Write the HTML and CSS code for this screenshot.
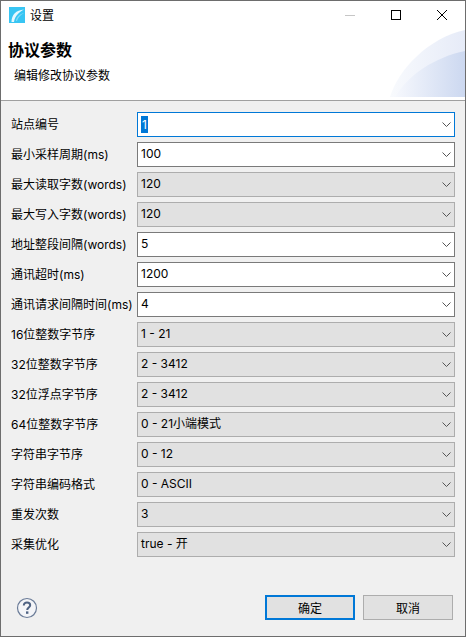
FILE: index.html
```html
<!DOCTYPE html>
<html>
<head>
	<title>设置</title>
	<meta charset="utf-8">
	<link rel="stylesheet" href="styles.css">
</head>
<body>
    <svg class="defs" width="0" height="0">
        <symbol id="chevron" viewBox="0 0 9 5">
            <path d="M0.5 0.5 L4.5 4.5 L8.5 0.5" fill="none" stroke="#555" stroke-width="1"/>
        </symbol>
        <linearGradient id="art-outer" x1="0" y1="0" x2="1" y2="0">
            <stop offset="0" stop-color="#f8fafd"/>
            <stop offset="1" stop-color="#e6ebf8"/>
        </linearGradient>
        <linearGradient id="art-inner" x1="0" y1="0" x2="1" y2="0">
            <stop offset="0" stop-color="#f6f8fd"/>
            <stop offset="1" stop-color="#ccd8f0"/>
        </linearGradient>
    </svg>
    <div class="window">
        <div class="title-bar">
            <svg class="app-icon" width="16" height="16" viewBox="0 0 16 16">
                <rect width="16" height="16" fill="#38c5f3"/>
                <path d="M2.5 15 C2.5 8 7 3 15 2.5 C10 5 6 9 5 15 Z" fill="#e6f8fe"/>
                <path d="M7 14 C7 11 10 7 15 6 C11 8 9 11 8 14 Z" fill="#7fdaf7"/>
            </svg>
            <span class="title-text">设置</span>
            <div class="win-buttons">
                <svg width="46" height="29" viewBox="0 0 46 29"><path d="M18 14.5 H28" stroke="#c6c6c6"/></svg>
                <svg width="46" height="29" viewBox="0 0 46 29"><rect x="18.5" y="9.5" width="9" height="9" fill="none" stroke="#000"/></svg>
                <svg width="46" height="29" viewBox="0 0 46 29"><path d="M18 9 L28 19 M28 9 L18 19" stroke="#000" fill="none"/></svg>
            </div>
        </div>
        <div class="header">
            <svg class="header-art" width="75" height="67" viewBox="0 0 75 67">
                <path d="M0 67 C8 40 38 8 75 0 V67 Z" fill="url(#art-outer)"/>
                <path d="M5 67 C18 45 45 27 75 21 V67 Z" fill="url(#art-inner)"/>
            </svg>
            <h1 class="header-title">协议参数</h1>
            <p class="header-desc">编辑修改协议参数</p>
        </div>
        <div class="form">
            <div class="row">
                <label class="row-label">站点编号</label>
                <div class="field focused"><span class="selected">1</span><svg class="chev"><use href="#chevron"/></svg></div>
            </div>
            <div class="row">
                <label class="row-label">最小采样周期(ms)</label>
                <div class="field"><span>100</span><svg class="chev"><use href="#chevron"/></svg></div>
            </div>
            <div class="row">
                <label class="row-label">最大读取字数(words)</label>
                <div class="field locked"><span>120</span><svg class="chev"><use href="#chevron"/></svg></div>
            </div>
            <div class="row">
                <label class="row-label">最大写入字数(words)</label>
                <div class="field locked"><span>120</span><svg class="chev"><use href="#chevron"/></svg></div>
            </div>
            <div class="row">
                <label class="row-label">地址整段间隔(words)</label>
                <div class="field"><span>5</span><svg class="chev"><use href="#chevron"/></svg></div>
            </div>
            <div class="row">
                <label class="row-label">通讯超时(ms)</label>
                <div class="field"><span>1200</span><svg class="chev"><use href="#chevron"/></svg></div>
            </div>
            <div class="row">
                <label class="row-label">通讯请求间隔时间(ms)</label>
                <div class="field"><span>4</span><svg class="chev"><use href="#chevron"/></svg></div>
            </div>
            <div class="row">
                <label class="row-label">16位整数字节序</label>
                <div class="field locked"><span>1 - 21</span><svg class="chev"><use href="#chevron"/></svg></div>
            </div>
            <div class="row">
                <label class="row-label">32位整数字节序</label>
                <div class="field locked"><span>2 - 3412</span><svg class="chev"><use href="#chevron"/></svg></div>
            </div>
            <div class="row">
                <label class="row-label">32位浮点字节序</label>
                <div class="field locked"><span>2 - 3412</span><svg class="chev"><use href="#chevron"/></svg></div>
            </div>
            <div class="row">
                <label class="row-label">64位整数字节序</label>
                <div class="field locked"><span>0 - 21小端模式</span><svg class="chev"><use href="#chevron"/></svg></div>
            </div>
            <div class="row">
                <label class="row-label">字符串字节序</label>
                <div class="field locked"><span>0 - 12</span><svg class="chev"><use href="#chevron"/></svg></div>
            </div>
            <div class="row">
                <label class="row-label">字符串编码格式</label>
                <div class="field locked"><span>0 - ASCII</span><svg class="chev"><use href="#chevron"/></svg></div>
            </div>
            <div class="row">
                <label class="row-label">重发次数</label>
                <div class="field locked"><span>3</span><svg class="chev"><use href="#chevron"/></svg></div>
            </div>
            <div class="row">
                <label class="row-label">采集优化</label>
                <div class="field locked"><span>true - 开</span><svg class="chev"><use href="#chevron"/></svg></div>
            </div>
        </div>
        <div class="footer">
            <svg class="help" width="22" height="22" viewBox="0 0 22 22">
                <circle cx="11" cy="11" r="9.5" fill="#f4f5f8" stroke="#6b7c98" stroke-width="1.2"/>
                <path d="M7.8 8.6 C7.8 6.6 9.2 5.6 11 5.6 C12.9 5.6 14.2 6.7 14.2 8.3 C14.2 10.4 11.2 10.6 11.2 13" fill="none" stroke="#4f6383" stroke-width="2"/>
                <rect x="10" y="14.4" width="2.4" height="2.4" fill="#4f6383"/>
            </svg>
            <div class="footer-buttons">
                <button class="btn primary">确定</button>
                <button class="btn">取消</button>
            </div>
        </div>
    </div>
</body>
</html>
```

FILE: styles.css
```css
html, body {
    margin: 0;
    padding: 0;
}
body {
    width: 466px;
    height: 637px;
    overflow: hidden;
    font-family: "Inter", "Noto Sans CJK SC", sans-serif;
    font-size: 12px;
    color: #000;
}
.defs {
    position: absolute;
}
.window {
    box-sizing: border-box;
    width: 466px;
    height: 637px;
    border: 1px solid #6d6d6d;
    background-color: #f0f0f0;
    display: flex;
    flex-direction: column;
}
.title-bar {
    box-sizing: border-box;
    height: 29px;
    background-color: #fff;
    display: flex;
    align-items: center;
    padding-left: 8px;
    flex-shrink: 0;
}
.app-icon {
    margin-bottom: 1px;
}
.title-text {
    margin-left: 5px;
    margin-bottom: 2px;
    font-family: "Noto Sans CJK SC", sans-serif;
    font-size: 12px;
}
.win-buttons {
    margin-left: auto;
    display: flex;
}
.win-buttons svg {
    display: block;
}
.header {
    position: relative;
    height: 70px;
    background-color: #fff;
    border-bottom: 1px solid #a0a0a0;
    flex-shrink: 0;
}
.header-art {
    position: absolute;
    right: 0;
    top: 0;
}
.header-title {
    margin: 0;
    padding: 8px 0 0 7px;
    font-family: "Noto Sans CJK SC", sans-serif;
    font-size: 16px;
    line-height: 22px;
    font-weight: 700;
}
.header-desc {
    margin: 7px 0 0 13px;
    font-family: "Noto Sans CJK SC", sans-serif;
    font-size: 12px;
    line-height: 16px;
}
.form {
    display: flex;
    flex-direction: column;
    gap: 5px;
    padding: 11px 10px 0 10px;
}
.row {
    display: flex;
    align-items: center;
    height: 25px;
}
.row-label {
    width: 126px;
    flex-shrink: 0;
    white-space: nowrap;
    line-height: 16px;
}
.field {
    box-sizing: border-box;
    width: 318px;
    height: 25px;
    display: flex;
    align-items: center;
    justify-content: space-between;
    background-color: #fff;
    border: 1px solid #7a7a7a;
    padding: 0 3px 0 3px;
}
.field span {
    line-height: 16px;
    margin-bottom: 2px;
}
.field.focused {
    border-color: #0078d7;
}
.field.locked {
    background-color: #e1e1e1;
    border-color: #adadad;
}
.field .selected {
    background-color: #0078d7;
    color: #fff;
    padding: 0 1px;
    margin-bottom: 0;
    line-height: 17px;
}
.chev {
    width: 9px;
    height: 5px;
    flex-shrink: 0;
}
.footer {
    margin-top: auto;
    display: flex;
    align-items: center;
    justify-content: space-between;
    padding: 0 12px 16px 15px;
}
.help {
    display: block;
}
.footer-buttons {
    display: flex;
    gap: 8px;
}
.btn {
    box-sizing: border-box;
    width: 90px;
    height: 25px;
    background-color: #e1e1e1;
    border: 1px solid #adadad;
    font-family: "Noto Sans CJK SC", sans-serif;
    font-size: 12px;
    color: #000;
    padding: 0;
}
.btn.primary {
    border: 2px solid #0078d7;
}
```
